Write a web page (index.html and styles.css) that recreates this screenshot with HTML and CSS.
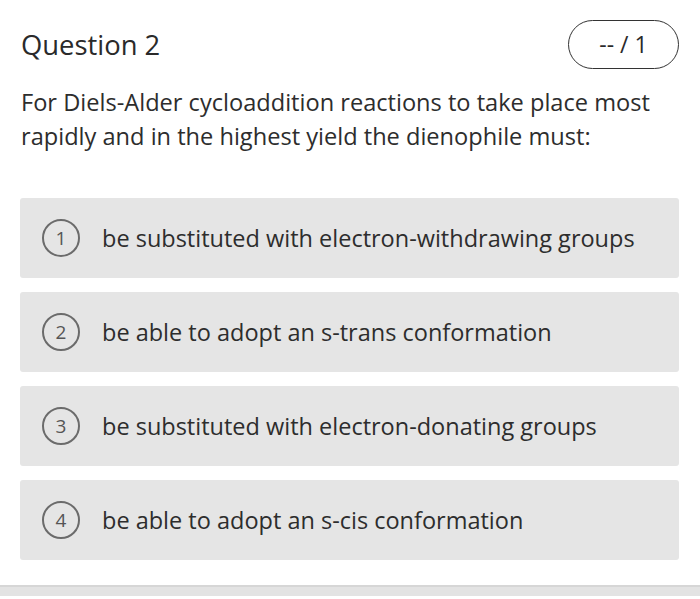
FILE: index.html
```html
<!DOCTYPE html>
<html>
<head>
<meta charset="utf-8">
<link rel="stylesheet" href="styles.css">
</head>
<body>
<div class="page">
  <div class="header">
    <h1 class="title">Question 2</h1>
    <div class="score">-- / 1</div>
  </div>
  <p class="prompt">For Diels-Alder cycloaddition reactions to take place most rapidly and in the highest yield the dienophile must:</p>
  <div class="options">
    <div class="option"><span class="num">1</span><span class="label">be substituted with electron-withdrawing groups</span></div>
    <div class="option"><span class="num">2</span><span class="label">be able to adopt an s-trans conformation</span></div>
    <div class="option"><span class="num">3</span><span class="label">be substituted with electron-donating groups</span></div>
    <div class="option"><span class="num">4</span><span class="label">be able to adopt an s-cis conformation</span></div>
  </div>
</div>
<div class="footer"></div>
</body>
</html>
```
FILE: styles.css
```css
html, body {
  margin: 0;
  padding: 0;
  background: #fff;
}
body {
  font-family: "Open Sans", "Liberation Sans", sans-serif;
  color: #2d2d2d;
  width: 700px;
  height: 599px;
  overflow: hidden;
}
.page {
  box-sizing: border-box;
  padding: 19px 21px 0 20px;
  height: 585px;
}
.header {
  display: flex;
  justify-content: space-between;
  align-items: center;
  height: 50px;
}
.title {
  margin: 0 0 0 1px;
  font-size: 27.4px;
  font-weight: 400;
  color: #2a2a2a;
}
.score {
  box-sizing: border-box;
  width: 111px;
  height: 49px;
  border: 1.5px solid #333;
  border-radius: 25px;
  display: flex;
  align-items: center;
  justify-content: center;
  font-size: 23px;
  color: #2a2a2a;
}
.prompt {
  margin: 16px 0 0 1px;
  font-size: 23.6px;
  line-height: 34px;
  color: #2d2d2d;
}
.options {
  margin-top: 45px;
  display: flex;
  flex-direction: column;
  gap: 14px;
}
.option {
  height: 80px;
  background: #e5e5e5;
  border-radius: 3px;
  display: flex;
  align-items: center;
  padding-left: 22px;
  box-sizing: border-box;
}
.num {
  box-sizing: border-box;
  width: 38px;
  height: 38px;
  border: 2px solid #6b6b6b;
  border-radius: 50%;
  display: flex;
  align-items: center;
  justify-content: center;
  font-size: 19px;
  color: #555;
  flex: none;
}
.label {
  margin-left: 22px;
  font-size: 23.5px;
  color: #2d2d2d;
}
.footer {
  height: 9px;
  background: #e3e3e3;
  border-top: 2px solid #d6d6d6;
}
```
